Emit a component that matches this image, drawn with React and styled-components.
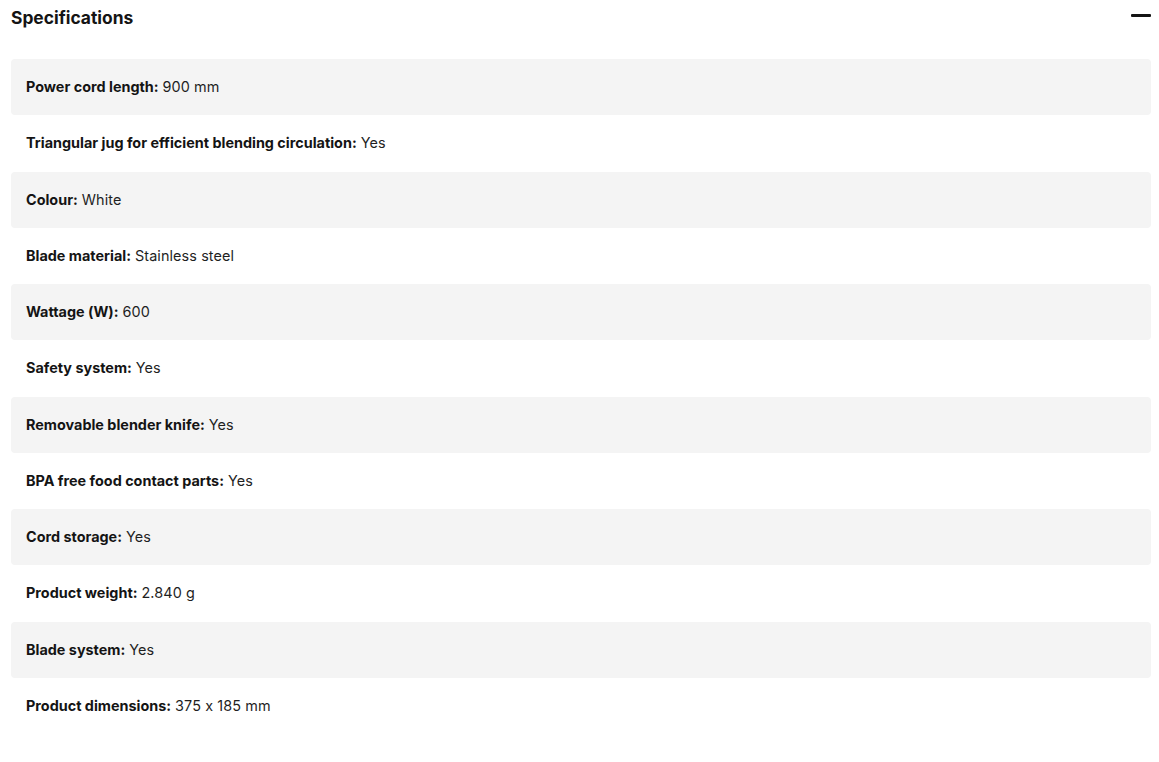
import React from "react";
import styled, { createGlobalStyle } from "styled-components";

const Global = createGlobalStyle`
  html, body { margin: 0; padding: 0; background: #fff; }
  body {
    font-family: Inter, "Noto Sans", sans-serif;
    color: #141414;
    font-feature-settings: "calt" 0;
  }
`;

const Section = styled.section`
  padding: 0 8px 0 11px;
`;

const Header = styled.div`
  display: flex;
  align-items: center;
  justify-content: space-between;
  height: 34px;
  margin-bottom: 25px;
`;

const Title = styled.h2`
  margin: 0;
  font-size: 17.4px;
  font-weight: 700;
  color: #141414;
`;

const ToggleButton = styled.button`
  border: 0;
  background: none;
  padding: 0;
  width: 20px;
  height: 20px;
  display: flex;
  align-items: center;
  justify-content: center;
  margin-top: -4px;
  cursor: pointer;
`;

const Minus = styled.span`
  display: block;
  width: 20px;
  height: 3px;
  background: #141414;
  border-radius: 1px;
`;

const List = styled.dl`
  margin: 0;
  display: flex;
  flex-direction: column;
`;

const Row = styled.div`
  box-sizing: border-box;
  height: 56.25px;
  padding: 0 15px 1px;
  display: flex;
  align-items: center;
  border-radius: 4px;
  background: ${(p) => (p.$shaded ? "#f4f4f4" : "transparent")};
  font-size: 14.4px;
`;

const Label = styled.dt`
  font-weight: 700;
  color: #141414;
  margin-right: 4px;
`;

const Value = styled.dd`
  margin: 0;
  color: #1f1f1f;
  letter-spacing: 0.1px;
`;

const specs = [
  ["Power cord length:", "900 mm"],
  ["Triangular jug for efficient blending circulation:", "Yes"],
  ["Colour:", "White"],
  ["Blade material:", "Stainless steel"],
  ["Wattage (W):", "600"],
  ["Safety system:", "Yes"],
  ["Removable blender knife:", "Yes"],
  ["BPA free food contact parts:", "Yes"],
  ["Cord storage:", "Yes"],
  ["Product weight:", "2.840 g"],
  ["Blade system:", "Yes"],
  ["Product dimensions:", "375 x 185 mm"],
];

export default function App() {
  return (
    <Section>
      <Global />
      <Header>
        <Title>Specifications</Title>
        <ToggleButton aria-label="Collapse">
          <Minus />
        </ToggleButton>
      </Header>
      <List>
        {specs.map(([k, v], i) => (
          <Row key={k} $shaded={i % 2 === 0}>
            <Label>{k}</Label>
            <Value>{v}</Value>
          </Row>
        ))}
      </List>
    </Section>
  );
}
